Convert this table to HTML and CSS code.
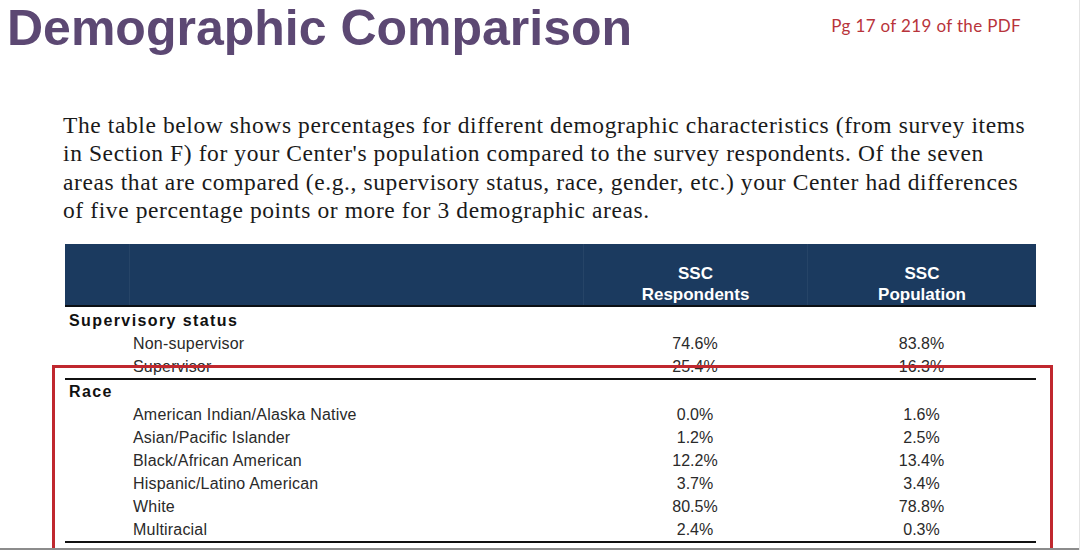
FILE: index.html
```html
<!DOCTYPE html>
<html lang="en">
<head>
<meta charset="utf-8">
<title>Demographic Comparison</title>
<link rel="stylesheet" href="styles.css">
</head>
<body>
<div class="page">
  <header class="top">
    <h1 class="title">Demographic Comparison</h1>
    <span class="pgnote">Pg 17 of 219 of the PDF</span>
  </header>

  <p class="intro">
    <span class="ln">The table below shows percentages for different demographic characteristics (from survey items</span>
    <span class="ln">in Section F) for your Center's population compared to the survey respondents. Of the seven</span>
    <span class="ln">areas that are compared (e.g., supervisory status, race, gender, etc.) your Center had differences</span>
    <span class="ln">of five percentage points or more for 3 demographic areas.</span>
  </p>

  <div class="table">
    <div class="thead">
      <div class="th"></div>
      <div class="th"></div>
      <div class="th">SSC<br>Respondents</div>
      <div class="th">SSC<br>Population</div>
    </div>

    <section class="group first">
      <div class="row"><span class="cat">Supervisory status</span></div>
      <div class="row"><span class="item">Non-supervisor</span><span class="val">74.6%</span><span class="val">83.8%</span></div>
      <div class="row"><span class="item">Supervisor</span><span class="val">25.4%</span><span class="val">16.3%</span></div>
    </section>

    <section class="group">
      <div class="row"><span class="cat">Race</span></div>
      <div class="row"><span class="item">American Indian/Alaska Native</span><span class="val">0.0%</span><span class="val">1.6%</span></div>
      <div class="row"><span class="item">Asian/Pacific Islander</span><span class="val">1.2%</span><span class="val">2.5%</span></div>
      <div class="row"><span class="item">Black/African American</span><span class="val">12.2%</span><span class="val">13.4%</span></div>
      <div class="row"><span class="item">Hispanic/Latino American</span><span class="val">3.7%</span><span class="val">3.4%</span></div>
      <div class="row"><span class="item">White</span><span class="val">80.5%</span><span class="val">78.8%</span></div>
      <div class="row"><span class="item">Multiracial</span><span class="val">2.4%</span><span class="val">0.3%</span></div>
    </section>

    <section class="group">
      <div class="row"><span class="cat">Gender</span></div>
    </section>
  </div>

  <div class="highlight"></div>
  <div class="edge-bottom"></div>
</div>
</body>
</html>
```

FILE: styles.css
```css
html, body {
  margin: 0;
  padding: 0;
  background: #ffffff;
  overflow: hidden;
}

.page {
  position: relative;
  width: 1080px;
  height: 550px;
  overflow: hidden;
  font-family: "Liberation Sans", Arial, sans-serif;
  color: #222;
  box-sizing: border-box;
  border-right: 1px solid #e4e4e4;
}

.top {
  display: flex;
  align-items: flex-start;
  height: 50px;
}

.title {
  margin: 0;
  padding: 3px 0 0 7px;
  font-family: "Liberation Sans", Arial, sans-serif;
  font-weight: bold;
  font-size: 50px;
  line-height: 50px;
  color: #5c4873;
  white-space: nowrap;
}

.pgnote {
  margin-left: auto;
  margin-right: 58px;
  margin-top: 15px;
  font-family: "Lato", "Open Sans", sans-serif;
  font-size: 17px;
  line-height: 21px;
  letter-spacing: 0.35px;
  color: #b8343b;
  white-space: nowrap;
}

.intro {
  margin: 61px 0 0 0;
  padding-left: 63px;
  font-family: "Liberation Serif", "Times New Roman", serif;
  font-size: 23.5px;
  line-height: 28.3px;
  letter-spacing: 0.6px;
  color: #1a1a1a;
}

.ln {
  display: block;
  white-space: nowrap;
}

.table {
  margin: 20px 0 0 65px;
  width: 971px;
}

.thead {
  display: grid;
  grid-template-columns: 64px 454px 224px 229px;
  height: 61px;
  background: #1b3a5f;
  border-bottom: 2px solid #0b0f14;
}

.th {
  padding-top: 19px;
  font-weight: bold;
  font-size: 17px;
  line-height: 21px;
  color: #ffffff;
  text-align: center;
  border-left: 1px solid rgba(255, 255, 255, 0.05);
}

.th:first-child {
  border-left: 0;
}

.group {
  border-bottom: 2px solid #111;
}

.group.first {
  margin-top: 2px;
}

.row {
  display: grid;
  grid-template-columns: 518px 224px 229px;
  height: 23px;
  font-size: 16px;
  line-height: 23px;
  color: #2a2a2a;
}

.cat {
  padding-left: 4px;
  font-weight: bold;
  letter-spacing: 1.4px;
  color: #111;
  white-space: nowrap;
}

.item {
  padding-left: 68px;
  letter-spacing: 0.2px;
  white-space: nowrap;
}

.val {
  text-align: center;
}

.highlight {
  position: absolute;
  left: 52px;
  top: 365px;
  width: 1001px;
  height: 240px;
  box-sizing: border-box;
  border: 3px solid #c0282e;
}

.edge-bottom {
  position: absolute;
  left: 0;
  right: 0;
  top: 548px;
  height: 2px;
  background: #8c8c8c;
}
```
